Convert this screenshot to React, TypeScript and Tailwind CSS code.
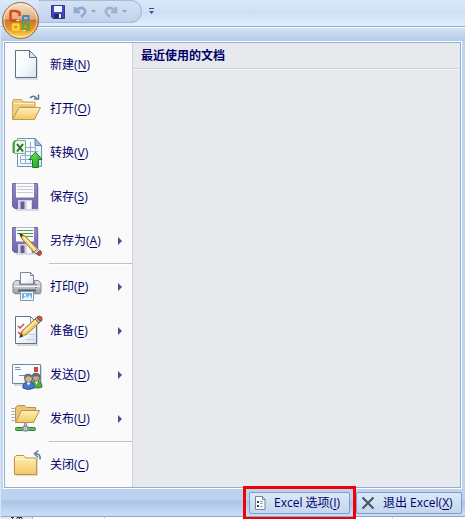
import type { ReactNode } from 'react';

interface MenuEntry {
  label: string;
  accessKey: string;
  icon: ReactNode;
  submenu?: boolean;
}

function NewIcon() {
  return (
    <svg viewBox="0 0 32 32" className="w-8 h-8">
      <path d="M5 3h15l7 8v20H5z" fill="#aab0ba" opacity=".35" />
      <path d="M4.5 1.5h14l7 7v20h-21z" fill="url(#paper)" stroke="#5f7186" />
      <path d="M18.5 1.5v7h7z" fill="#dce7f3" stroke="#5f7186" />
    </svg>
  );
}

function OpenIcon() {
  return (
    <svg viewBox="0 0 32 32" className="w-8 h-8">
      <path d="M1.5 26V8.5l1-2h8l2 2.500h11.500V14H9z" fill="#efcf84" stroke="#d0a658" />
      <path d="M3 10.500h20" stroke="#fff0bd" />
      <path d="M1.500 26.500 8 14.500h21.500l-6 12z" fill="url(#folder)" stroke="#c39a48" />
      <path d="M19 5q4-4 7 1" fill="none" stroke="#5d7691" strokeWidth="1.500" />
      <path d="M23 6h4.500V1.500" fill="none" stroke="#5d7691" strokeWidth="1.500" />
    </svg>
  );
}

function ConvertIcon() {
  return (
    <svg viewBox="0 0 32 32" className="w-8 h-8">
      <path d="M6.500 1.500H24l6.500 7v21h-24z" fill="url(#paper)" stroke="#6f8fb5" />
      <path d="M24 1.500v7h6.500z" fill="#9cbce0" stroke="#6486b1" />
      <path
        d="M9.500 19v7.500H25M9.500 22.500H25M14.500 8v18.500M19.500 5v21.500M24.500 9v12M14 10.500h11M14 14.500h13M10 18.500h17"
        fill="none"
        stroke="#91add1"
      />
      <path d="M3.500 3.500h11v13h-11z" fill="#e9f5e4" stroke="#7db574" />
      <path d="M1.500 16V7q0-4 5-3.500-3 1-3 4V16z" fill="#48a23f" />
      <path d="m6 7 6 7.500M12 7l-6 7.500" stroke="#2c6737" strokeWidth="2" />
      <path d="m24.500 15 6.500 7.500h-3.500v8h-6v-8H18z" fill="url(#green)" stroke="#168022" />
    </svg>
  );
}

function Floppy() {
  return (
    <>
      <path d="M3 5h25v25H5z" fill="#a5a5b4" opacity=".4" />
      <path d="M1.500 2.500h25v25h-23l-2-2z" fill="url(#violet)" stroke="#7468a8" />
      <path d="M5 2.500h18v14H5z" fill="#fbfbfd" />
      <path d="M7 19h14v9H7z" fill="#d5d6df" />
      <path d="M9.500 20.500h4V28h-4z" fill="#675ba0" />
      <path d="M16 20h4v8h-4z" fill="#f7f7fa" />
    </>
  );
}

function SaveIcon() {
  return (
    <svg viewBox="0 0 32 32" className="w-8 h-8">
      <Floppy />
      <path d="M6 5.500h16M6 8.500h16M6 11.500h16" stroke="#cacbd2" />
    </svg>
  );
}

function SaveAsIcon() {
  return (
    <svg viewBox="0 0 32 32" className="w-8 h-8">
      <Floppy />
      <path d="M6 5.500h16M6 8.500h16M13 11.500h9" stroke="#48a344" />
      <path d="m9 9 5 2 12.500 13-3.500 3.500L11 14z" fill="#f3cb66" stroke="#a57c3c" />
      <path d="m12.500 12 12.500 13.500" stroke="#fff0b4" strokeWidth="1.500" />
      <path d="m8 8 2 4.500 2.500-2.500z" fill="#40352e" />
      <path d="m23 27 3.500-3.500 2 2-3.500 3.500z" fill="#cad0c9" stroke="#7d877d" />
      <path d="m25.500 29 3.500-3.500q2 1 1.500 3t-2.500 2z" fill="#bf5148" stroke="#934037" />
    </svg>
  );
}

function PrintIcon() {
  return (
    <svg viewBox="0 0 32 32" className="w-8 h-8">
      <path d="M4 11h26v13H4z" fill="#999" opacity=".3" />
      <path d="M9.500 13V1.500h10l3 3V13z" fill="url(#paper)" stroke="#7e8793" />
      <path d="M19.500 1.500v3h3" fill="none" stroke="#7e8793" />
      <path d="M4.500 9.500h4v4h15v-4h4l2.500 3v9l-2 1H4l-2-1v-9z" fill="url(#metal)" stroke="#858a90" />
      <path d="M3 15.500h26" stroke="#f4f5f6" />
      <path d="M7 19.500h18" stroke="#565d65" strokeWidth="2" />
      <path d="M24 13.500h2M24 16.500h2" stroke="#7b8188" />
      <path d="M9.500 20.500h13v9h-13z" fill="#f8fcff" stroke="#8296aa" />
      <path d="M11 22h10v6H11z" fill="#70b2e0" />
      <path d="m11.500 28 3-3 2 1.500 2-3 2.500 4.500z" fill="#e1f2fc" />
      <path d="M13 23h2v2h-2z" fill="#fff" />
    </svg>
  );
}

function PrepareIcon() {
  return (
    <svg viewBox="0 0 32 32" className="w-8 h-8">
      <path d="M6 4h21v27H6z" fill="#999" opacity=".35" />
      <path d="M4.500 1.500h15l6 6v21h-21z" fill="url(#paper)" stroke="#637586" />
      <path d="M19.500 1.500v6h6" fill="none" stroke="#8394a5" />
      <path d="m7 11 2 2 4-4M7 17l2 2 4-4" fill="none" stroke="#d7454c" strokeWidth="1.500" />
      <path d="M16 13.500h3M18 19.500h6M15 24.500h8" stroke="#c2ced9" />
      <path d="m9.500 20 2.500-5L24.500 3.500l4 4L15 20z" fill="#f3cb66" stroke="#a57c3c" />
      <path d="M12.500 17.500 26 5" stroke="#fff0b4" strokeWidth="1.500" />
      <path d="m8 23 2-4.500 2.500 3z" fill="#443c35" />
      <path d="m24 4 1.500-1.500 4 4L28 8z" fill="#a9b9ac" stroke="#64755f" />
      <path d="M26 2q3-2 4.500 0t-.5 4.500z" fill="#c95754" stroke="#974543" />
    </svg>
  );
}

function SendIcon() {
  return (
    <svg viewBox="0 0 32 32" className="w-8 h-8">
      <path d="M3 7h28v20H3z" fill="#999" opacity=".35" />
      <path d="M1.500 5.500h28v19h-28z" fill="url(#paper)" stroke="#71869e" />
      <path d="M4 8.500h5M4 10.500h6M8 16.500h8" stroke="#7592b3" />
      <path d="M23 8h4v5h-4z" fill="#dd422d" />
      <path d="M20 28q-1-6 5-6 6 0 6 6-3 2-11 0z" fill="#51a949" stroke="#32772d" />
      <circle cx="25" cy="18.500" r="4" fill="#c7a37c" stroke="#515961" />
      <path d="M21 18q0-5 5-4 4 1 3 5l-3-2z" fill="#606b72" />
      <path d="M12 29q-1-6 6-6 6 0 5 6-6 3-11 0z" fill="#4179ce" stroke="#254e98" />
      <circle cx="17.500" cy="19.500" r="4" fill="#d2b08c" stroke="#555960" />
      <path d="M13.500 19q-1-5 5-4 4 1 3 4l-4-2z" fill="#68717a" />
      <path d="m15.500 23.500 2 3 2-3" fill="#f8fbff" />
      <path d="m24 22.500 1.500 3 1.500-3" fill="#f8fbff" />
    </svg>
  );
}

function PublishIcon() {
  return (
    <svg viewBox="0 0 32 32" className="w-8 h-8">
      <path d="M.5 5.500h3M.5 8.500h3M.5 11.500h3M.5 14.500h3M.5 17.500h3" stroke="#95a9bb" />
      <path d="M4.500 19V4.500l2-2h7l2 2h9V9H12z" fill="#eac67b" stroke="#c18e3c" />
      <path d="m4.500 19.500 6-12h18l-6 12z" fill="url(#folder)" stroke="#c0923f" />
      <path d="M14.500 20v4" stroke="#8a929a" strokeWidth="3" />
      <path d="M14.500 20v4M11 25.500h7" stroke="#cbd1d7" />
      <rect x="4.500" y="24.500" width="8" height="3" rx="1" fill="#61bb64" stroke="#327f37" />
      <rect x="16.500" y="24.500" width="8" height="3" rx="1" fill="#61bb64" stroke="#327f37" />
      <rect x="12" y="23" width="5" height="5" rx="1" fill="#b9c1ca" stroke="#737e89" />
    </svg>
  );
}

function CloseIcon() {
  return (
    <svg viewBox="0 0 32 32" className="w-8 h-8">
      <path d="M5 9h22v18H5z" fill="#999" opacity=".3" />
      <path d="M3.500 25.500V8.500l1.500-2h8l2 2.500h9.500q1 0 1 2v14.500z" fill="url(#folder)" stroke="#c09341" />
      <path d="M4 10.500h20" stroke="#fff5cf" />
      <path d="M29 10.500q1-6-5-6" fill="none" stroke="#627b97" strokeWidth="1.500" />
      <path d="M27.500 1.500 23.500 4.500l3.500 4" fill="none" stroke="#627b97" strokeWidth="1.500" />
    </svg>
  );
}

const groups: MenuEntry[][] = [
  [
    { label: '新建', accessKey: 'N', icon: <NewIcon /> },
    { label: '打开', accessKey: 'O', icon: <OpenIcon /> },
    { label: '转换', accessKey: 'V', icon: <ConvertIcon /> },
    { label: '保存', accessKey: 'S', icon: <SaveIcon /> },
    { label: '另存为', accessKey: 'A', icon: <SaveAsIcon />, submenu: true },
  ],
  [
    { label: '打印', accessKey: 'P', icon: <PrintIcon />, submenu: true },
    { label: '准备', accessKey: 'E', icon: <PrepareIcon />, submenu: true },
    { label: '发送', accessKey: 'D', icon: <SendIcon />, submenu: true },
    { label: '发布', accessKey: 'U', icon: <PublishIcon />, submenu: true },
  ],
  [{ label: '关闭', accessKey: 'C', icon: <CloseIcon /> }],
];

function Gradients() {
  return (
    <svg className="absolute w-0 h-0" aria-hidden="true">
      <defs>
        <linearGradient id="paper" x1="0" y1="0" x2="1" y2="1">
          <stop stopColor="#fff" />
          <stop offset=".5" stopColor="#f8fbfe" />
          <stop offset="1" stopColor="#d5e2f0" />
        </linearGradient>
        <linearGradient id="folder" x1="0" y1="0" x2="0" y2="1">
          <stop stopColor="#fff0b8" />
          <stop offset="1" stopColor="#f2c766" />
        </linearGradient>
        <linearGradient id="violet" x1="0" y1="0" x2="0" y2="1">
          <stop stopColor="#9489c8" />
          <stop offset="1" stopColor="#7064aa" />
        </linearGradient>
        <linearGradient id="green" x1="0" y1="0" x2="1" y2="1">
          <stop stopColor="#86e450" />
          <stop offset="1" stopColor="#0c9b20" />
        </linearGradient>
        <linearGradient id="metal" x1="0" y1="0" x2="0" y2="1">
          <stop stopColor="#e3e5e8" />
          <stop offset="1" stopColor="#9a9fa5" />
        </linearGradient>
        <linearGradient id="orb" x1="0" y1="0" x2="0" y2="1">
          <stop stopColor="#f8e5cd" />
          <stop offset=".45" stopColor="#e0ad78" />
          <stop offset=".5" stopColor="#c8782c" />
          <stop offset=".75" stopColor="#ea962c" />
          <stop offset="1" stopColor="#ffe25f" />
        </linearGradient>
      </defs>
    </svg>
  );
}

function OfficeButton() {
  return (
    <button aria-label="Office" className="absolute left-0.5 top-0.5 z-10">
      <svg viewBox="0 0 38 38" className="w-[38px] h-[38px]">
        <circle cx="18.500" cy="18.500" r="18" fill="url(#orb)" stroke="#946c4b" />
        <circle cx="18.500" cy="18.500" r="16.500" fill="none" stroke="#fff3d4" opacity=".65" />
        <g fill="none" strokeLinejoin="round">
          <path d="M14.500 9H9.500q-1 0-1 1v7.500q0 1 1 1h5M14 9l3.500 1.500V14" stroke="#d9451d" strokeWidth="2.500" />
          <path d="M21 14h5.500v4.500H21z" stroke="#3f86cf" strokeWidth="2" />
          <path d="M11 22.500h5.500v5H11z" stroke="#fbd32f" strokeWidth="2.500" />
          <path d="M21 21.500h5.500v6H21z" stroke="#5cab2e" strokeWidth="2.500" />
          <path d="M14.500 18.500H17M20.500 28.500h3" stroke="#fff0ce" />
        </g>
      </svg>
    </button>
  );
}

function DownArrow() {
  return (
    <svg viewBox="0 0 5 3" className="w-[5px] h-[3px]">
      <path d="M0 0h5L2.500 3z" fill="#8fa4c4" />
    </svg>
  );
}

function QuickAccess() {
  return (
    <div className="flex h-[26px] items-start bg-linear-to-b from-[#dbe8fa] via-[#cfdff5] to-[#dff0ff] pl-[38px]">
      <div className="flex h-[23px] w-[104px] items-center rounded-r-full border border-[#a5bcda] border-l-transparent bg-linear-to-b from-[#d5e2f4] to-[#c0d2eb] pl-3">
        <button aria-label="保存">
          <svg viewBox="0 0 14 14" className="w-3.5 h-3.5">
            <path d="M.5.5h13v13H2L.5 12z" fill="#4448ba" stroke="#363596" />
            <path d="M3 1h8v6H3z" fill="#eef7ff" />
            <path d="M3 9h8v4H3z" fill="#232c66" />
            <path d="M8 9h2v4H8z" fill="#f2f4fa" />
          </svg>
        </button>
        <button aria-label="撤消" className="ml-2">
          <svg viewBox="0 0 14 14" className="w-3.5 h-3.5">
            <path d="M2 2v5h5M2.500 6q5-5 8.500-2t-3 8" fill="none" stroke="#8fa9cf" strokeWidth="2.500" />
          </svg>
        </button>
        <button aria-label="撤消列表" className="ml-1">
          <DownArrow />
        </button>
        <button aria-label="恢复" className="ml-2">
          <svg viewBox="0 0 14 14" className="w-3.5 h-3.5">
            <path d="M12 2v5H7M11.500 6q-5-5-8.500-2t3 8" fill="none" stroke="#9db3d2" strokeWidth="2.500" />
          </svg>
        </button>
        <button aria-label="恢复列表" className="ml-1">
          <DownArrow />
        </button>
      </div>
      <button aria-label="自定义快速访问工具栏" className="ml-[7px] mt-2">
        <svg viewBox="0 0 5 6" className="w-[5px] h-1.5">
          <path d="M0 .5h5" stroke="#31558f" />
          <path d="M0 3h5L2.500 6z" fill="#31558f" />
        </svg>
      </button>
    </div>
  );
}

function MenuItem({ label, accessKey, icon, submenu }: MenuEntry) {
  return (
    <button className="flex h-11 w-full items-center pl-1.5 pr-2.5 text-left">
      {icon}
      <span className="ml-[7px] flex-1">
        {label}(<u className="underline-offset-2">{accessKey}</u>)
      </span>
      {submenu && (
        <svg viewBox="0 0 4 8" className="w-1 h-2">
          <path d="M0 0v8l4-4z" fill="#42518c" />
        </svg>
      )}
    </button>
  );
}

export default function App() {
  return (
    <div className="relative w-full overflow-hidden bg-[#d8e6f8] font-['Open_Sans','Noto_Sans_CJK_SC',sans-serif] text-xs leading-4 text-[#00006b]">
      <Gradients />
      <OfficeButton />
      <QuickAccess />

      <div className="ml-px border-t border-[#8fadd0] bg-[#bfd4ef]">
        <div className="h-[14px] border-t border-white bg-linear-to-b from-[#d3e2f3] to-[#b3cae8]" />

        <div className="ml-0.5 mr-[3px] border border-white">
          <div className="flex border border-[#92aed0]">
            <nav className="w-32 shrink-0 border-r border-[#cfd3da] bg-[#fafafa]">
              {groups.map((items, i) => (
                <div key={i}>
                  {i > 0 && <div className="ml-11 h-0.5 border-t border-[#bfc2c6] bg-white" />}
                  {items.map((item) => (
                    <MenuItem key={item.accessKey} {...item} />
                  ))}
                </div>
              ))}
            </nav>
            <section className="flex-1 bg-[#e8e9ed]">
              <h2 className="border-b border-[#cfd3da] px-2 pt-[5px] pb-1 font-bold shadow-[0_1px_0_#f7f7f8]">
                最近使用的文档
              </h2>
            </section>
          </div>
        </div>

        <div className="flex h-7 items-center justify-end gap-1.5 border-b border-[#8fa9cc] bg-linear-to-b from-[#bdd2ee] from-40% via-[#abc5e8] via-45% to-[#cbdef5] pr-[3px]">
          <div className="relative">
            <button className="flex h-[22px] w-[101px] items-center gap-2 rounded-xs border border-[#829dc4] bg-linear-to-b from-[#dce8f8] to-[#c4d7ef] pl-1 whitespace-nowrap">
              <svg viewBox="0 0 12 14" className="w-3 h-3.5 shrink-0">
                <path d="M1.500.5h7l2.500 3v10H1.500z" fill="#fafcff" stroke="#74869a" />
                <path d="M8.500.5v3H11" fill="none" stroke="#74869a" />
                <path d="M3 5h2v2H3zM3 9h2v2H3z" fill="#35445c" />
                <path d="M6.500 5.500h2M6.500 7.500h2M6.500 10.500h2" stroke="#7a8796" />
              </svg>
              <span>
                Excel 选项(<u className="underline-offset-2">I</u>)
              </span>
            </button>
            <div className="pointer-events-none absolute -inset-1.5 border-3 border-[#f00008]" />
          </div>
          <button className="flex h-[22px] w-[106px] items-center gap-2 rounded-xs border border-[#829dc4] bg-linear-to-b from-[#dce8f8] to-[#c4d7ef] pl-1 whitespace-nowrap">
            <svg viewBox="0 0 14 14" className="w-3.5 h-3.5 shrink-0">
              <path d="m1.500 1.500 11 11M12.500 1.500l-11 11" stroke="#465366" strokeWidth="2" />
            </svg>
            <span>
              退出 Excel(<u className="underline-offset-2">X</u>)
            </span>
          </button>
        </div>
      </div>

      <div className="flex h-[3px] bg-white">
        <div className="w-[33px] border-r border-[#aab8cc] bg-[#e2ebf7]">
          <svg viewBox="0 0 33 3" className="h-[3px] w-[33px]">
            <path d="M11 .5h3M12.500 0v3M17 3V.5h5V3M19.500 0v2" fill="none" stroke="#30384a" />
          </svg>
        </div>
        <div className="w-[72px] border-r border-[#d0d7e5]" />
        <div className="w-72 border-r border-[#d0d7e5]" />
      </div>
    </div>
  );
}
